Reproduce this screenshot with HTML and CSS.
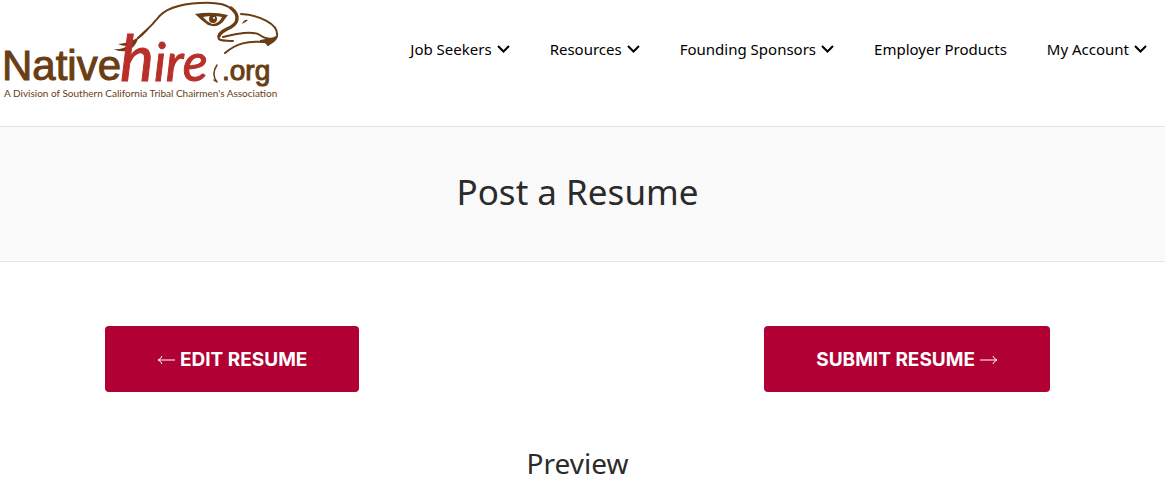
FILE: index.html
```html
<!DOCTYPE html>
<html lang="en">
<head>
<meta charset="utf-8">
<meta name="viewport" content="width=device-width, initial-scale=1">
<title>Post a Resume</title>
<link rel="stylesheet" href="styles.css">
</head>
<body>
<header class="site-header">
  <a class="logo" href="#" aria-label="Nativehire.org">
    <svg width="285" height="105" viewBox="0 0 285 105">
      <g fill="none" stroke="#6a3d14" stroke-linecap="round" stroke-linejoin="round">
        <path stroke-width="2" d="M138 38C146 30 150 28 157 19C164 9 178 4 200 3C216 2 226 4 232 9"/>
        <path stroke-width="3.4" d="M231 8C240 15 238 23 231 27C225 30 220 32 219 36"/>
        <path stroke-width="2" d="M219 35C216 42 225 40 233 41M223 37C237 34 249 31 258 34C264 38 270 41 276 37"/>
        <path stroke-width="2" d="M241 14C259 15 279 24 277 36C276 41 270 43 268 45C267 43 266 42 264 42C247 41 237 43 225 53"/>
        <path stroke-width="1.5" d="M217 65C213 71 213 77 217 82L214 80"/>
      </g>
      <path fill="#6a3d14" d="M156 18Q147 34 138 39Q135 47 129 50Q122 53 113 49Q121 50 127 46Q122 46 118 44Q130 43 137 38Q146 33 156 18ZM195 14Q212 11 228 15L225 19Q219 29 208 25Q202 21 195 14ZM242 24Q244 19 248 20Q246 22 242 24ZM260 40L277 37L268 46Q267 42 260 42Z"/>
      <path fill="#fff" d="M203 17Q213 15 222 17Q219 24 212 24Q206 21 203 17Z"/>
      <circle cx="213" cy="19" r="4" fill="#6a3d14"/><circle cx="214" cy="18" r="1" fill="#fff"/>
      <text class="logo-name" x="2" y="80">Native</text>
      <text class="logo-script" x="120" y="81"><tspan class="logo-h">h</tspan>ire</text>
      <text class="logo-org" x="222" y="80">.org</text>
      <text class="logo-tag" x="4" y="97">A Division of Southern California Tribal Chairmen's Association</text>
    </svg>
  </a>
  <nav class="nav" aria-label="Main">
    <a href="#">Job Seekers <svg class="chevron" viewBox="0 0 13 8"><path d="M1 1L6.500 6.500L12 1"/></svg></a>
    <a href="#">Resources <svg class="chevron" viewBox="0 0 13 8"><path d="M1 1L6.500 6.500L12 1"/></svg></a>
    <a href="#">Founding Sponsors <svg class="chevron" viewBox="0 0 13 8"><path d="M1 1L6.500 6.500L12 1"/></svg></a>
    <a href="#">Employer Products</a>
    <a href="#">My Account <svg class="chevron" viewBox="0 0 13 8"><path d="M1 1L6.500 6.500L12 1"/></svg></a>
  </nav>
</header>
<section class="page-title"><h1>Post a Resume</h1></section>
<main class="content">
  <form class="actions">
    <button type="button"><svg class="arrow" viewBox="0 0 18 10"><path d="M18 5H1M5 1Q4 4 1 5Q4 6 5 9"/></svg>EDIT RESUME</button>
    <button type="button">SUBMIT RESUME<svg class="arrow" viewBox="0 0 18 10"><path d="M0 5H17M13 1Q14 4 17 5Q14 6 13 9"/></svg></button>
  </form>
  <h2>Preview</h2>
</main>
</body>
</html>
```
FILE: styles.css
```css
* { box-sizing: border-box; }
body { margin: 0; background: #fff; color: #2b2b2b; font-family: "Noto Sans", sans-serif; }
.site-header { display: flex; justify-content: space-between; align-items: flex-start; padding: 0 18px 21px 0; }
.logo, .logo svg { display: block; flex: none; }
.logo-name { font: 42px "Liberation Sans", sans-serif; fill: #6a3d14; stroke: #6a3d14; }
.logo-org { font: 28px "Liberation Sans", sans-serif; fill: #6a3d14; stroke: #6a3d14; }
.logo-script { font: italic 52px Lato, sans-serif; fill: #b92f29; stroke: #b92f29; }
.logo-h { font-size: 64px; }
.logo-tag { font: 400 10px Lato, sans-serif; fill: #6a3d14; }
.nav { display: flex; gap: 40px; padding-top: 38px; }
.nav a { display: flex; align-items: center; gap: 5px; color: #000; font-size: 15px; line-height: 22px; text-decoration: none; white-space: nowrap; }
.chevron { width: 13px; height: 8px; fill: none; stroke: #000; stroke-width: 2; }
.page-title { padding: 41px 10px 45px 0; background: #fafafa; border: solid #e5e5e5; border-width: 1px 0; text-align: center; }
h1, h2 { margin: 0; font-weight: 400; }
h1 { font-size: 35px; line-height: 48px; }
.content { padding: 64px 115px 12px 105px; }
.actions { display: flex; justify-content: space-between; }
button { display: flex; align-items: center; gap: 5px; height: 66px; padding: 0 52px; border: 0; border-radius: 4px; background: #b10034; color: #fff; font: 700 19px Inter, sans-serif; white-space: nowrap; }
.arrow { width: 18px; height: 10px; margin-top: 2px; fill: none; stroke: #fff; stroke-width: 1; }
h2 { margin-top: 53px; font-size: 28px; line-height: 36px; text-align: center; }
```
